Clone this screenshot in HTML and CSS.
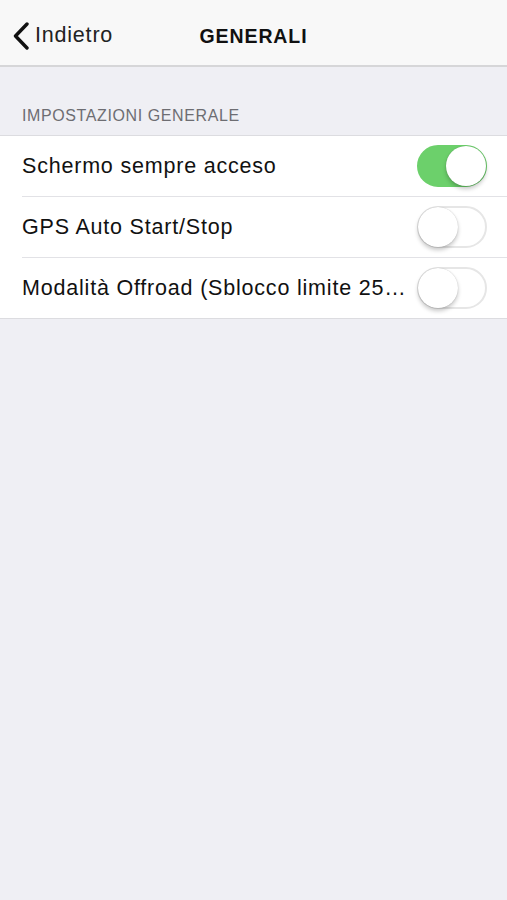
FILE: index.html
```html
<!DOCTYPE html>
<html lang="it">
<head>
<meta charset="utf-8">
<title>Generali</title>
<link rel="stylesheet" href="styles.css">
</head>
<body>
<header class="nav">
  <div class="back">
    <svg class="chev" width="19" height="28" viewBox="0 0 19 28"><path d="M16 2 L4.5 14 L16 26" fill="none" stroke="#111" stroke-width="3.4" stroke-linecap="round" stroke-linejoin="round"/></svg>
    <span>Indietro</span>
  </div>
  <div class="title">GENERALI</div>
</header>
<main>
  <div class="section-title">IMPOSTAZIONI GENERALE</div>
  <ul class="group">
    <li class="row"><span class="label">Schermo sempre acceso</span><span class="switch on"><span class="knob"></span></span></li>
    <li class="row"><span class="label">GPS Auto Start/Stop</span><span class="switch"><span class="knob"></span></span></li>
    <li class="row"><span class="label">Modalità Offroad (Sblocco limite 25 km/h)</span><span class="switch"><span class="knob"></span></span></li>
  </ul>
</main>
</body>
</html>
```
FILE: styles.css
```css
html, body { margin: 0; padding: 0; }
body {
  width: 507px;
  height: 900px;
  background: #efeff4;
  font-family: "Liberation Sans", Arial, sans-serif;
  color: #111;
  overflow: hidden;
}
.nav {
  height: 65px;
  background: #f8f8f8;
  border-bottom: 2px solid #d6d6d8;
  position: relative;
  display: flex;
  align-items: center;
}
.back {
  display: flex;
  align-items: center;
  padding-left: 11px;
  padding-top: 6px;
  font-size: 21.5px;
  letter-spacing: 0.8px;
  color: #222;
}
.chev { margin-right: 5px; }
.title {
  position: absolute;
  left: 0; right: 0;
  top: 25px;
  text-align: center;
  font-weight: bold;
  font-size: 19.5px;
  letter-spacing: 0.9px;
  pointer-events: none;
}
.section-title {
  padding: 40px 0 0 22px;
  height: 28px;
  font-size: 16px;
  letter-spacing: 0.6px;
  color: #6d6d72;
}
.group {
  list-style: none;
  margin: 0;
  padding: 0;
  background: #fff;
  border-top: 1px solid #dcdce0;
  border-bottom: 1px solid #dcdce0;
}
.row {
  height: 60px;
  margin-left: 22px;
  padding-right: 20px;
  display: flex;
  align-items: center;
  justify-content: space-between;
  border-bottom: 1px solid #e2e2e6;
}
.row:last-child { border-bottom: none; }
.label {
  font-size: 21.5px;
  letter-spacing: 0.8px;
  white-space: nowrap;
  overflow: hidden;
  text-overflow: ellipsis;
  max-width: 385px;
}
.switch {
  width: 70px;
  height: 42px;
  border-radius: 21px;
  box-sizing: border-box;
  border: 2px solid #e6e6e6;
  background: #fff;
  position: relative;
  flex: none;
}
.switch .knob {
  position: absolute;
  left: -1px; top: -1px;
  width: 40px; height: 40px;
  border-radius: 50%;
  background: #fff;
  box-shadow: 0 3px 4px rgba(0,0,0,0.22), 0 0 1px rgba(0,0,0,0.25);
}
.switch.on {
  background: #6cd06b;
  border-color: #6cd06b;
}
.switch.on .knob {
  left: auto; right: -1px;
}
```
